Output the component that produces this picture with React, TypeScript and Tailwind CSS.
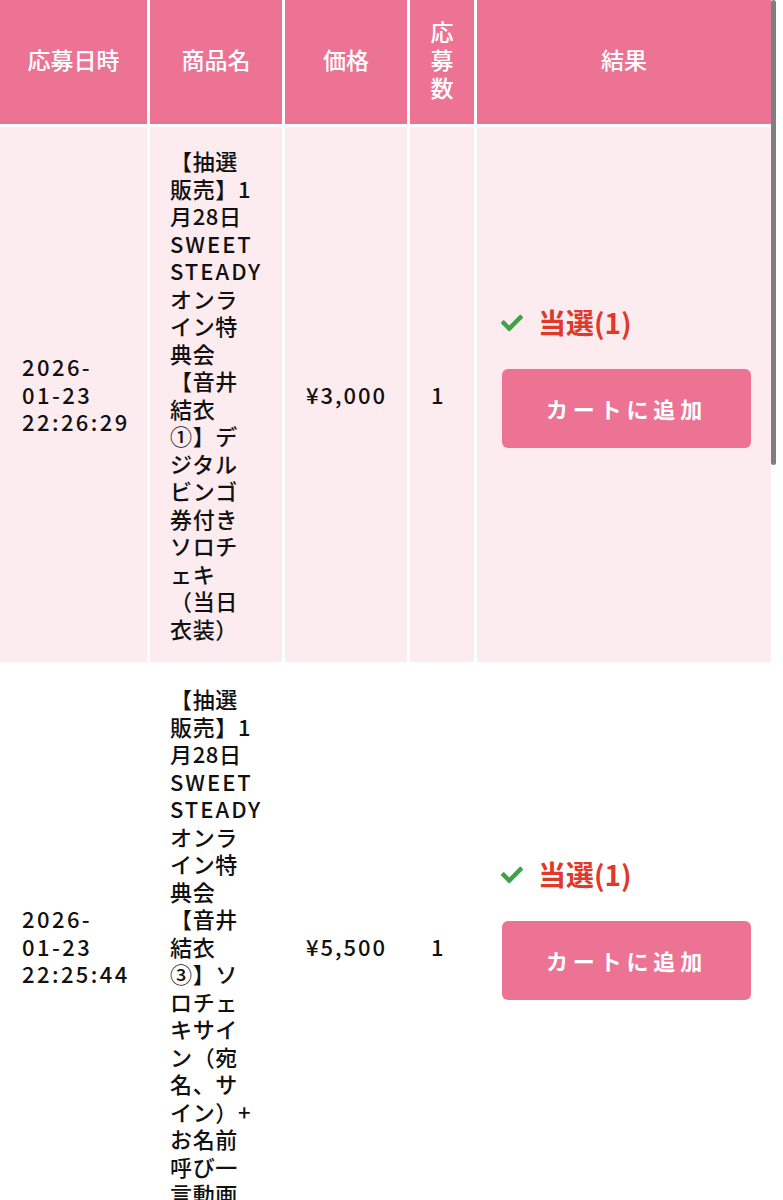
import { FaCheck } from "react-icons/fa";

type Entry = {
  date: string[];
  name: string[];
  price: string;
  qty: string;
  result: string;
};

const entries: Entry[] = [
  {
    date: ["2026-", "01-23", "22:26:29"],
    name: [
      "【抽選",
      "販売】1",
      "月28日",
      "SWEET",
      "STEADY",
      "オンラ",
      "イン特",
      "典会",
      "【音井",
      "結衣",
      "①】デ",
      "ジタル",
      "ビンゴ",
      "券付き",
      "ソロチ",
      "ェキ",
      "（当日",
      "衣装）",
    ],
    price: "¥3,000",
    qty: "1",
    result: "当選(1)",
  },
  {
    date: ["2026-", "01-23", "22:25:44"],
    name: [
      "【抽選",
      "販売】1",
      "月28日",
      "SWEET",
      "STEADY",
      "オンラ",
      "イン特",
      "典会",
      "【音井",
      "結衣",
      "③】ソ",
      "ロチェ",
      "キサイ",
      "ン（宛",
      "名、サ",
      "イン）+",
      "お名前",
      "呼び一",
      "言動画",
    ],
    price: "¥5,500",
    qty: "1",
    result: "当選(1)",
  },
];

const cols = "grid grid-cols-[147px_132px_122px_64px_294px] gap-x-[3px]";

export default function App() {
  return (
    <div className="relative w-[783px] bg-white font-['Noto_Sans_CJK_JP',sans-serif] text-[22px] font-medium text-[#111]">
      {/* header */}
      <div className={`${cols} mb-[3px] h-[124px] text-[23px] text-white [&>div]:pb-[6px]`}>
        <div className="flex items-center justify-center bg-[#ec7394]">応募日時</div>
        <div className="flex items-center justify-center bg-[#ec7394]">商品名</div>
        <div className="flex items-center justify-center bg-[#ec7394]">価格</div>
        <div className="flex items-center justify-center bg-[#ec7394] px-[20px] text-center leading-[28px]">
          応募数
        </div>
        <div className="flex items-center justify-center bg-[#ec7394]">結果</div>
      </div>

      {entries.map((e, i) => (
        <div
          key={i}
          className={`${cols} mb-[3px] leading-[27.5px] ${i % 2 === 0 ? "[&>div]:bg-[#fdecef]" : "[&>div]:bg-white"}`}
        >
          <div className="flex flex-col justify-center py-5 pl-[22px] tracking-[0.11em]">
            {e.date.map((d) => (
              <span key={d}>{d}</span>
            ))}
          </div>
          <div className="flex flex-col justify-center whitespace-nowrap py-5 pl-[20px] tracking-[0.03em]">
            {e.name.map((n, j) => (
              <span key={j} className={/^[A-Z]+$/.test(n) ? "tracking-[0.09em]" : ""}>
                {n}
              </span>
            ))}
          </div>
          <div className="flex items-center py-5 pl-[21px] tracking-[0.09em]">{e.price}</div>
          <div className="flex items-center py-5 pl-[21px]">{e.qty}</div>
          <div className="flex flex-col justify-center py-5 pl-[23px] pr-[20px] pb-[56px]">
            <div className="flex h-[36px] items-center gap-[14px]">
              <FaCheck className="h-[22px] w-[24px] text-[#3fa24b]" />
              <span className="text-[28px] font-semibold text-[#e0382a]">{e.result}</span>
            </div>
            <button className="mt-[28px] ml-[2px] h-[79px] w-[249px] rounded-[6px] bg-[#ec7394] text-[22px] font-bold tracking-[0.22em] text-white">
              カートに追加
            </button>
          </div>
        </div>
      ))}

      {/* overlay scrollbar */}
      <div className="absolute left-[771px] top-0 h-[465px] w-[5px] rounded-full bg-black/50" />
    </div>
  );
}
